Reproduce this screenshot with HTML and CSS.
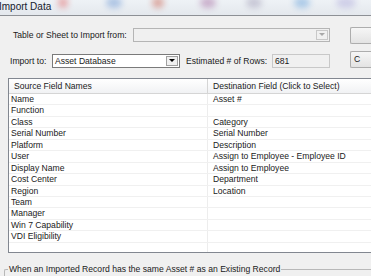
FILE: index.html
```html
<!DOCTYPE html>
<html lang="en">
<head>
    <meta charset="UTF-8">
    <title>Import Data</title>
    <link rel="stylesheet" href="styles.css">
</head>
<body>
    <div class="titlebar">
        <div class="glass-icons">
            <span class="blob b-red"></span>
            <span class="blob b-blue"></span>
            <span class="blob b-multi"></span>
            <span class="blob b-red2"></span>
            <span class="blob b-gray"></span>
            <span class="blob b-blue2"></span>
            <span class="blob b-purple"></span>
        </div>
        <div class="title-text">Import Data</div>
    </div>

    <div class="dialog">
        <div class="form-row row-sheet">
            <span class="label label-sheet">Table or Sheet to Import from:</span>
            <div class="combo combo-disabled">
                <span class="combo-value"></span>
                <span class="combo-btn"><span class="arrow arrow-gray"></span></span>
            </div>
            <div class="side-btn btn-top"></div>
        </div>

        <div class="form-row row-target">
            <span class="label label-import">Import to:</span>
            <div class="combo combo-target">
                <span class="combo-value">Asset Database</span>
                <span class="combo-btn"><span class="arrow"></span></span>
            </div>
            <span class="label label-rows">Estimated # of Rows:</span>
            <div class="readonly-field">681</div>
            <div class="side-btn btn-c">C</div>
        </div>

        <div class="grid">
            <div class="grid-head">
                <div class="cell col-src">Source Field Names</div>
                <div class="cell col-dst">Destination Field (Click to Select)</div>
            </div>
            <div class="grid-body" id="gridBody"></div>
        </div>

        <div class="groupbox">
            <span class="group-title">When an Imported Record has the same Asset # as an Existing Record</span>
        </div>
    </div>

    <script>
        // source -> destination mapping rows
        var rows = [
            ['Name', 'Asset #'],
            ['Function', ''],
            ['Class', 'Category'],
            ['Serial Number', 'Serial Number'],
            ['Platform', 'Description'],
            ['User', 'Assign to Employee - Employee ID'],
            ['Display Name', 'Assign to Employee'],
            ['Cost Center', 'Department'],
            ['Region', 'Location'],
            ['Team', ''],
            ['Manager', ''],
            ['Win 7 Capability', ''],
            ['VDI Eligibility', ''],
            ['', ''],
            ['', '']
        ];

        var body = document.getElementById('gridBody');
        rows.forEach(function (r) {
            var row = document.createElement('div');
            row.className = 'grid-row';
            row.innerHTML = '<div class="cell col-src">' + r[0] + '</div>' +
                            '<div class="cell col-dst">' + r[1] + '</div>';
            body.appendChild(row);
        });
    </script>
</body>
</html>
```

FILE: styles.css
```css
* {
    margin: 0;
    padding: 0;
    box-sizing: border-box;
}

body {
    width: 371px;
    height: 276px;
    overflow: hidden;
    background-color: #f0f0f0;
    font-family: 'Liberation Sans', Arial, sans-serif;
    font-size: 8.6px;
    color: #1a1a1a;
}

/* 标题栏 */
.titlebar {
    position: relative;
    height: 16px;
    background: linear-gradient(#eef2f6, #e4e8ed);
    border-bottom: 1px solid #8d9095;
    overflow: hidden;
}

.glass-icons {
    display: flex;
    padding-left: 50px;
    height: 15px;
    align-items: flex-start;
    overflow: hidden;
}

.blob {
    flex-shrink: 0;
    width: 16px;
    height: 11px;
    margin-right: 28px;
    border-radius: 50%;
    filter: blur(3px);
    opacity: 0.45;
    margin-top: -3px;
}

.b-red { background: #e05050; width: 10px; margin-left: 8px; margin-right: 38px; }
.b-blue { background: #5f8ed0; margin-right: 30px; }
.b-multi { background: #c8503a; width: 12px; margin-right: 36px; }
.b-red2 { background: #a0609a; margin-right: 30px; }
.b-gray { background: #9a95b0; margin-right: 32px; }
.b-blue2 { background: #5a9ad8; margin-right: 26px; }
.b-purple { background: #a9a3d8; width: 20px; margin-right: 0; }

.title-text {
    position: absolute;
    left: -1px;
    top: 1px;
    font-size: 10px;
    color: #15202e;
}

/* 对话框内容 */
.dialog {
    padding-top: 10px;
}

.form-row {
    display: flex;
    align-items: center;
}

.form-row > * {
    flex-shrink: 0;
}

.row-sheet {
    height: 17px;
}

.row-target {
    margin-top: 9px;
    height: 17px;
}

.label {
    color: #1a1a1a;
    white-space: nowrap;
}

.label-sheet {
    margin-left: 13px;
    width: 120px;
}

.label-import {
    margin-left: 10px;
    width: 42px;
}

.label-rows {
    margin-left: 6px;
    width: 86px;
}

.combo {
    height: 14px;
    display: flex;
    align-items: stretch;
    border: 1px solid #7a7a7a;
    background: #fff;
}

.combo-disabled {
    width: 197px;
    border-color: #b5b5b5;
    background: #f0f0f0;
}

.combo-target {
    width: 128px;
}

.combo-value {
    flex: 1;
    padding-left: 2px;
    line-height: 12px;
}

.combo-btn {
    width: 12px;
    margin: 1px;
    border: 1px solid #a0a0a0;
    background: #f0f0f0;
    display: flex;
    align-items: center;
    justify-content: center;
}

.combo-disabled .combo-btn {
    border-color: #c8c8c8;
}

.arrow {
    width: 0;
    height: 0;
    border-left: 3px solid transparent;
    border-right: 3px solid transparent;
    border-top: 3px solid #000;
}

.arrow-gray {
    border-top-color: #a8a8a8;
}

.readonly-field {
    width: 58px;
    height: 14px;
    border: 1px solid #c8c8c8;
    background: #f0f0f0;
    padding-left: 2px;
    line-height: 12px;
}

/* 右侧按钮被窗口裁掉，只露出左半边 */
.side-btn {
    margin-left: 20px;
    width: 21px;
    height: 17px;
    border: 1px solid #adadad;
    border-right: none;
    border-radius: 2px 0 0 2px;
    background: linear-gradient(#f6f6f6, #e3e3e3);
    padding-left: 3px;
    line-height: 15px;
}

.btn-top {
    margin-top: 1px;
}

.btn-c {
    margin-top: -3px;
}

/* 字段映射表 */
.grid {
    margin-top: 9px;
    margin-left: 8px;
    width: 363px;
    height: 175px;
    border: 1px solid #828790;
    border-right: none;
    background: #fff;
    overflow: hidden;
}

.grid-head {
    display: flex;
    height: 15px;
    background: linear-gradient(#ffffff, #f1f2f4);
    border-bottom: 1px solid #d5d5d5;
}

.grid-head .cell {
    line-height: 14px;
    padding-left: 5px;
}

.grid-head .col-src {
    border-right: 1px solid #d5d5d5;
}

.grid-row {
    display: flex;
    height: 11.45px;
    border-bottom: 1px solid #f0f0f0;
}

.cell {
    white-space: nowrap;
    overflow: hidden;
}

.col-src {
    flex-shrink: 0;
    width: 199px;
    padding-left: 2px;
    border-right: 1px solid #ededed;
}

.col-dst {
    flex: 1;
    padding-left: 5px;
}

.grid-row .cell {
    line-height: 10.5px;
}

/* 分组框 */
.groupbox {
    margin-top: 16px;
    margin-left: 4px;
    height: 8px;
    border: 1px solid #b8b8b8;
    border-right: none;
    border-bottom: none;
    border-radius: 2px 0 0 0;
}

.group-title {
    display: inline-block;
    margin-top: -6px;
    margin-left: 3px;
    padding: 0 1px;
    background: #f0f0f0;
    line-height: 10px;
    vertical-align: top;
}
```
